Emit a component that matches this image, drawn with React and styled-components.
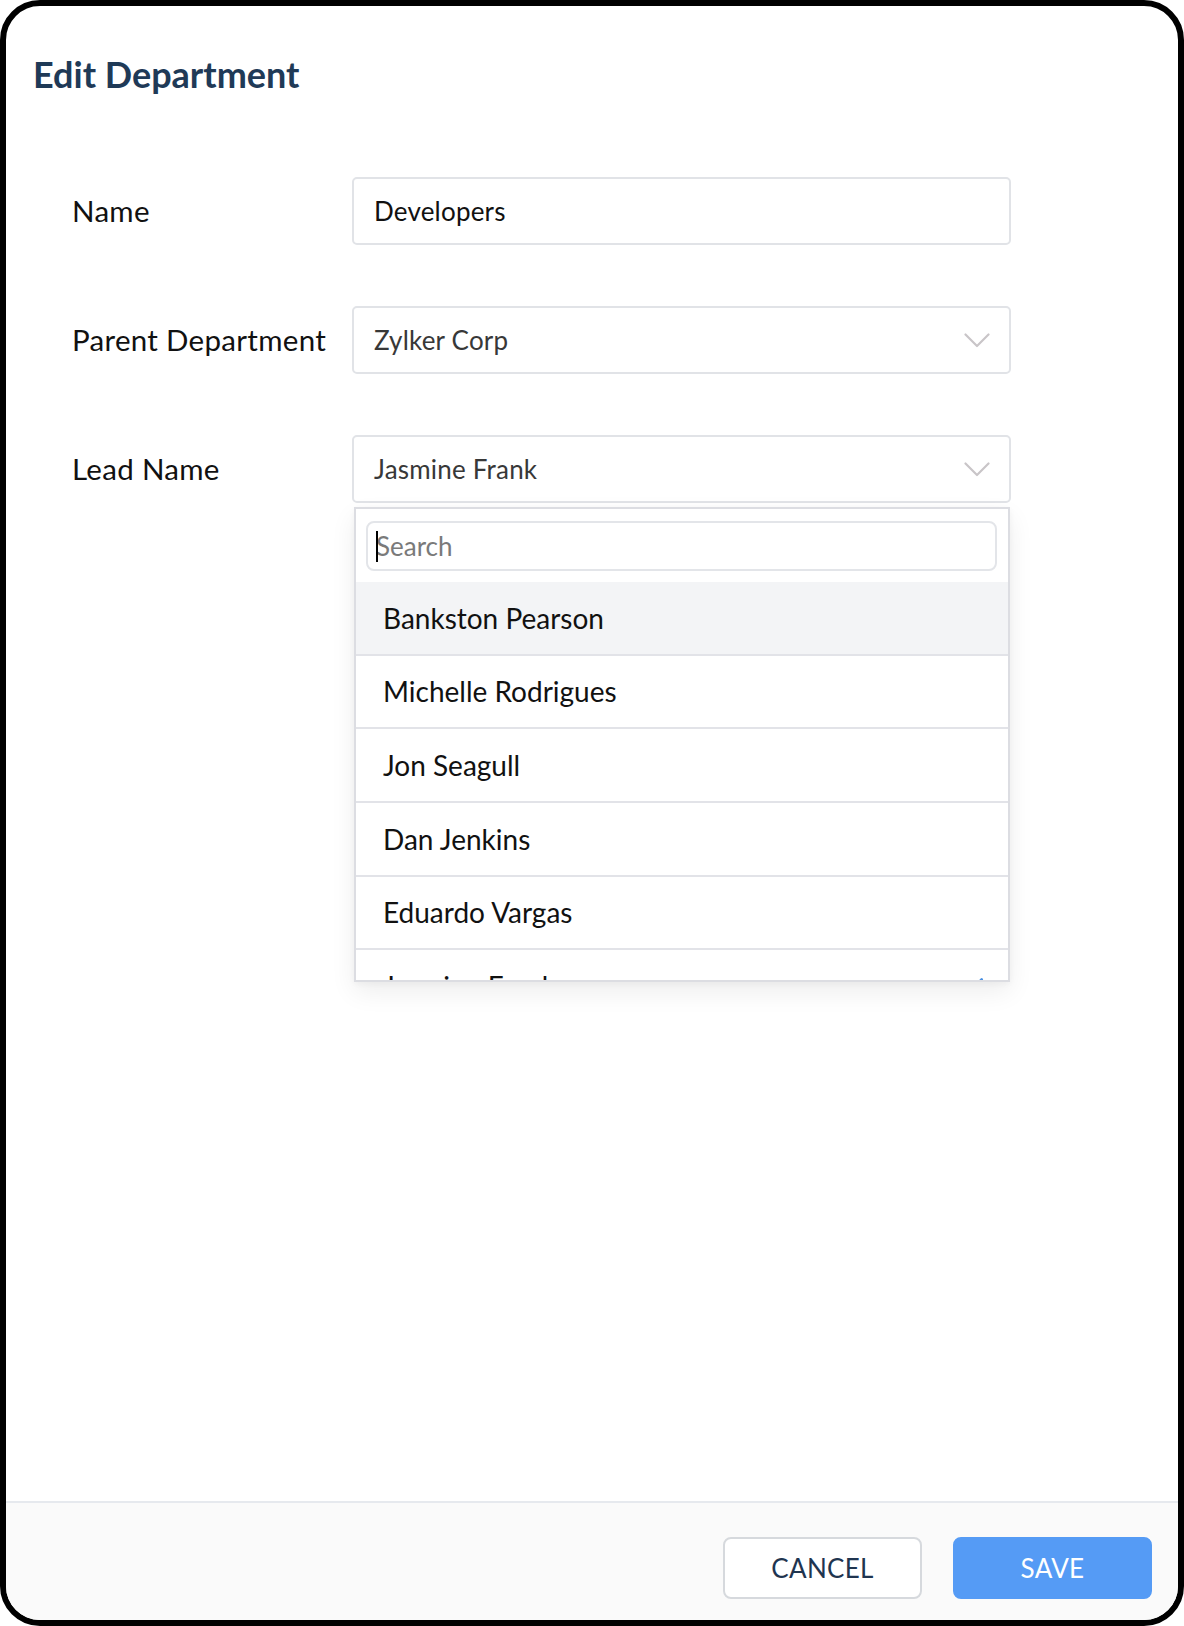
import React from "react";
import styled, { createGlobalStyle } from "styled-components";
import { Check } from "lucide-react";

//Global Styles
const GlobalStyle = createGlobalStyle`
  html, body {
    margin: 0;
    padding: 0;
    background: #ffffff;
  }
  body {
    font-family: "Lato", "Open Sans", sans-serif;
    -webkit-font-smoothing: antialiased;
  }
  * {
    box-sizing: border-box;
  }
`;

//Data
const leads = [
  "Bankston Pearson",
  "Michelle Rodrigues",
  "Jon Seagull",
  "Dan Jenkins",
  "Eduardo Vargas",
  "Jasmine Frank",
];

//Styled Components
const Dialog = styled.div`
  width: 1184px;
  height: 1626px;
  border: 6px solid #000000;
  border-radius: 40px;
  background: #ffffff;
  display: flex;
  flex-direction: column;
  overflow: hidden;
`;

const Body = styled.div`
  flex: 1;
  display: flex;
  flex-direction: column;
`;

const Title = styled.h1`
  margin: 0;
  padding: 46px 0 0 27px;
  font-size: 36px;
  line-height: 44px;
  font-weight: 700;
  color: #1f3a57;
`;

const Form = styled.div`
  display: grid;
  grid-template-columns: 280px 659px;
  row-gap: 61px;
  align-items: center;
  margin-top: 81px;
  padding-left: 66px;
`;

const Label = styled.label`
  font-size: 29.5px;
  letter-spacing: 0.3px;
  color: #111111;
  line-height: 34px;
`;

const Field = styled.div`
  position: relative;
  height: 68px;
  display: flex;
  align-items: center;
  justify-content: space-between;
  padding: 0 19px 0 20px;
  border: 2px solid #e1e3e7;
  border-radius: 5px;
  background: #ffffff;
  font-size: 26px;
  letter-spacing: 0.2px;
  color: ${(props) => (props.muted ? "#383838" : "#111111")};
`;

const Chevron = () => (
  <svg width="26" height="15" viewBox="0 0 26 15" fill="none">
    <polyline
      points="1.5,1.5 13,13 24.5,1.5"
      stroke="#c9c5c8"
      strokeWidth="2.2"
      strokeLinecap="round"
      strokeLinejoin="round"
    />
  </svg>
);

const Menu = styled.div`
  position: absolute;
  top: calc(100% + 6px);
  left: 0;
  right: -1px;
  border: 2px solid #dcdde2;
  background: #ffffff;
  box-shadow: 0 10px 24px rgba(0, 0, 0, 0.07), 0 2px 6px rgba(0, 0, 0, 0.04);
  letter-spacing: 0;
  z-index: 10;
`;

const SearchBox = styled.div`
  padding: 12px 11px 11px 10px;
`;

const SearchField = styled.div`
  position: relative;
  height: 50px;
  border: 2px solid #e3e5e9;
  border-radius: 8px;
  display: flex;
  align-items: center;

  &::before {
    content: "";
    position: absolute;
    left: 8px;
    top: 8px;
    width: 2px;
    height: 31px;
    background: #000000;
  }
`;

const SearchInput = styled.input`
  width: 100%;
  border: none;
  outline: none;
  background: transparent;
  padding: 0 0 0 8px;
  font-family: "Lato", sans-serif;
  font-size: 26px;
  color: #111111;

  &::placeholder {
    color: #7a7a7a;
  }
`;

const List = styled.div`
  height: 398px;
  overflow: hidden;
`;

const Item = styled.div`
  height: 73.66px;
  display: flex;
  align-items: center;
  justify-content: space-between;
  padding: 0 22px 0 27px;
  border-bottom: 2px solid #e2e3e8;
  background: ${(props) => (props.active ? "#f3f4f6" : "#ffffff")};
  font-size: 28px;
  color: #111111;
`;

const Footer = styled.div`
  height: 119px;
  border-top: 2px solid #e6e9ee;
  background: #fafafa;
  display: flex;
  justify-content: flex-end;
  align-items: flex-start;
  gap: 31px;
  padding: 34px 26px 0 0;
`;

const Button = styled.button`
  width: 199px;
  height: 62px;
  border-radius: 8px;
  border: 2px solid ${(props) => (props.primary ? "#559bf5" : "#d6d9dd")};
  background: ${(props) => (props.primary ? "#559bf5" : "#ffffff")};
  color: ${(props) => (props.primary ? "#ffffff" : "#1f3550")};
  font-family: "Lato", sans-serif;
  font-size: 26px;
  letter-spacing: 0.3px;
  cursor: pointer;
`;

export default function App() {
  return (
    <>
      <GlobalStyle />
      <Dialog>
        <Body>
          <Title>Edit Department</Title>
          <Form>
            <Label>Name</Label>
            <Field>Developers</Field>

            <Label>Parent Department</Label>
            <Field muted>
              Zylker Corp
              <Chevron />
            </Field>

            <Label>Lead Name</Label>
            <Field muted>
              Jasmine Frank
              <Chevron />
              <Menu>
                <SearchBox>
                  <SearchField>
                    <SearchInput placeholder="Search" />
                  </SearchField>
                </SearchBox>
                <List>
                  {leads.map((name, i) => (
                    <Item key={name} active={i === 0}>
                      {name}
                      {name === "Jasmine Frank" && (
                        <Check size={26} color="#4a90e2" strokeWidth={2.5} />
                      )}
                    </Item>
                  ))}
                </List>
              </Menu>
            </Field>
          </Form>
        </Body>
        <Footer>
          <Button>CANCEL</Button>
          <Button primary>SAVE</Button>
        </Footer>
      </Dialog>
    </>
  );
}
